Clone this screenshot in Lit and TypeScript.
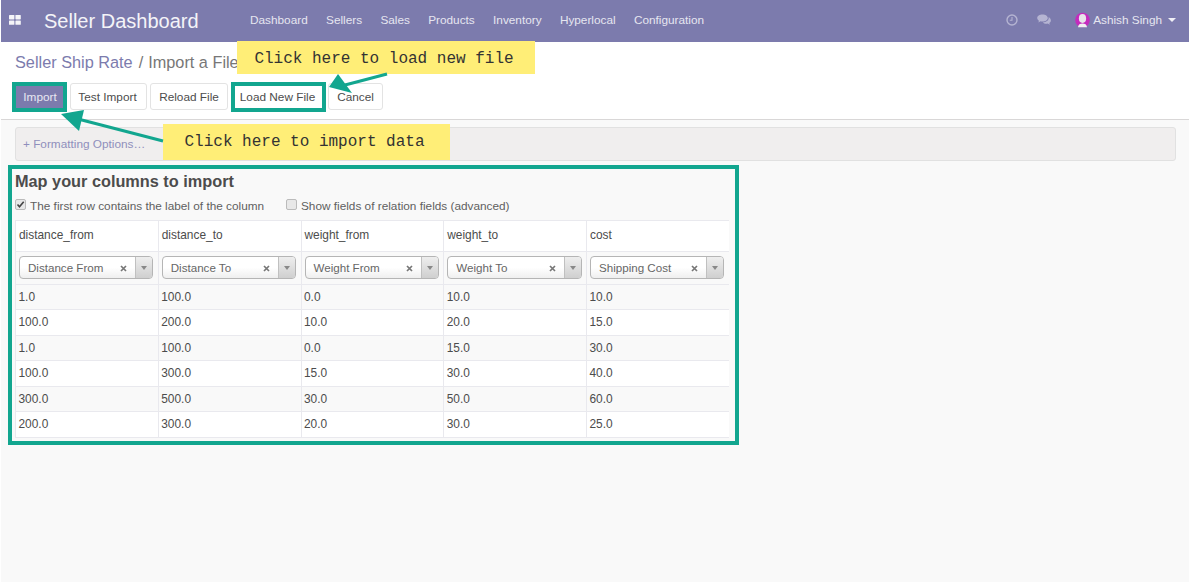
import { LitElement, html, css, svg } from "lit";
import { customElement } from "lit/decorators.js";

const HEAD = ["distance_from", "distance_to", "weight_from", "weight_to", "cost"];
const MAP = ["Distance From", "Distance To", "Weight From", "Weight To", "Shipping Cost"];
const ROWS = [
  ["1.0", "100.0", "0.0", "10.0", "10.0"],
  ["100.0", "200.0", "10.0", "20.0", "15.0"],
  ["1.0", "100.0", "0.0", "15.0", "30.0"],
  ["100.0", "300.0", "15.0", "30.0", "40.0"],
  ["300.0", "500.0", "30.0", "50.0", "60.0"],
  ["200.0", "300.0", "20.0", "30.0", "25.0"],
];
const MENU = ["Dashboard", "Sellers", "Sales", "Products", "Inventory", "Hyperlocal", "Configuration"];

@customElement("app-root")
export class AppRoot extends LitElement {
  static styles = css`
    :host { display: block; width: 1189px; height: 582px; position: relative; overflow: hidden; background: #fff;
      font-family: "Liberation Sans", Arial, sans-serif; font-size: 11.8px; color: #4c4c4c; }
    .page { display: flex; flex-direction: column; height: 582px; padding-left: 1px; box-sizing: border-box; }
    .nav { height: 42px; background: #7c7bad; display: flex; align-items: center; color: #fff; flex: none; }
    .apps { width: 12px; height: 10px; margin-left: 8px; margin-right: 23px; display: block; margin-top: -2px; }
    .brand { font-size: 20px; width: 206px; color: #f4f4f8; white-space: nowrap; }
    .menu { display: flex; gap: 18.3px; color: #e6e6f0; margin-top: -2px; }
    .right { margin-left: auto; display: flex; align-items: center; margin-right: 13px; color: #e6e6f0; margin-top: -2px; }
    .right svg { display: block; }
    .clock { margin-right: 19px; }
    .chat { margin-right: 23px; }
    .avatar { margin-right: 3px; }
    .caret { width: 0; height: 0; border-left: 4px solid transparent; border-right: 4px solid transparent; border-top: 4px solid #f0f0f6; margin-left: 6px; }
    .panel { height: 78px; flex: none; box-sizing: border-box; border-bottom: 1px solid #d9d7d7; background: #fff; padding: 10px 0 0 14px; }
    .crumb { font-size: 16.3px; line-height: 20px; color: #777; white-space: nowrap; display: flex; }
    .crumb b { font-weight: 400; color: #7c7bad; }
    .sep { margin: 0 5px 0 6px; }
    .btns { display: flex; align-items: center; margin-top: 9.5px; margin-left: -3px; }
    .btn { height: 27px; box-sizing: border-box; border: 1px solid #e3e3e3; border-radius: 3px; background: #fff; color: #4c4c4c;
      display: flex; align-items: center; justify-content: center; }
    .btn.test { padding-right: 2px; }
    .mark { border: 4px solid #12a68f; box-sizing: border-box; height: 30px; display: flex; align-items: center; justify-content: center; }
    .mark.primary { width: 55px; background: #7c7bad; color: #e8e8f2; margin-right: 3px; padding-left: 1px; }
    .mark.load { width: 95px; margin-right: 2px; margin-left: 3px; color: #4c4c4c; padding-right: 2px; }
    .test { width: 77px; margin-right: 3px; }
    .reload { width: 78px; }
    .cancel { width: 55px; }
    .main { flex: 1; background: #f9f9f9; padding: 7px 0 0 7px; }
    .fmt { margin: 0 13px 0 7px; height: 34px; box-sizing: border-box; background: #f0eeee; border: 1px solid #e1e1e1; border-radius: 3px;
      padding: 0 7px; display: flex; align-items: center; color: #8f8ebc; }
    .box { margin-top: 4px; width: 731px; height: 280px; box-sizing: border-box; border: 4px solid #12a68f; padding: 3px 6px 0 3px; }
    h2 { margin: 0; font-size: 16.3px; line-height: 18px; font-weight: 700; color: #4c4c4c; }
    .opts { display: flex; height: 24px; align-items: center; margin-top: 4px; color: #5f5f5f; }
    .cb { width: 9px; height: 9px; border: 1px solid #bbb; border-radius: 2px; background: #e8e8e8; margin-right: 4px; flex: none; display: flex; align-items: center; justify-content: center; margin-top: -3px; }
    .cb svg { display: block; }
    .o1 { width: 271px; display: flex; align-items: center; }
    .o2 { display: flex; align-items: center; }
    .grid { display: grid; grid-template-columns: repeat(5, 141.75px); column-gap: 1px; background: #e9e9ee; border: 1px solid #e9e9ee; width: 714px; box-sizing: border-box;
      grid-auto-rows: 24.5px; grid-template-rows: 30px 31.5px; row-gap: 1px; margin-top: 2px; }
    .c { padding: 0 3px 0 2.5px; display: flex; align-items: center; background: #fff; color: #4c4c4c; white-space: nowrap; min-width: 0; font-size: 11.9px; }
    .c.alt { background: #f9f9f9; }
    .c.hd { background: #fff; padding: 0 3px 2px; }
    .c.sel { background: #f9f9f9; padding: 0 4.5px 0 3px; font-size: 11.6px; }
    .select { flex: 1; height: 23px; box-sizing: border-box; border: 1px solid #b5b5b5; border-radius: 4px; display: flex; align-items: stretch;
      background: linear-gradient(#fff 50%, #efefef); color: #666; overflow: hidden; }
    .val { flex: 1; display: flex; align-items: center; padding-left: 8px; position: relative; margin-top: -1px; }
    .x { position: absolute; right: 8px; top: 9px; display: block; }
    .drop { width: 16px; flex: none; border-left: 1px solid #c0c0c0; background: linear-gradient(#eee, #cfcfcf); display: flex; align-items: center; justify-content: center; }
    .tri { width: 0; height: 0; border-left: 3px solid transparent; border-right: 3px solid transparent; border-top: 4px solid #888; }
    .note { position: absolute; background: #ffee77; color: #333; font-family: "Liberation Mono", "Courier New", monospace; font-size: 16px;
      display: flex; align-items: center; justify-content: center; white-space: nowrap; box-sizing: border-box; padding-right: 4px; }
    .n1 { left: 237px; top: 41px; width: 298px; height: 33px; padding-top: 2px; }
    .n2 { left: 163px; top: 124px; width: 287px; height: 36px; }
    .arrows { position: absolute; left: 0; top: 0; pointer-events: none; }
  `;

  render() {
    return html`
      <div class="page">
        <div class="nav">
          <svg class="apps" viewBox="0 0 12 10">
            <g fill="#f4f4f8"><rect x="0" y="0" width="5.4" height="4.4" rx=".6"/><rect x="6.4" y="0" width="5.4" height="4.4" rx=".6"/><rect x="0" y="5.4" width="5.4" height="4.4" rx=".6"/><rect x="6.4" y="5.4" width="5.4" height="4.4" rx=".6"/></g>
          </svg>
          <div class="brand">Seller Dashboard</div>
          <div class="menu">${MENU.map((m) => html`<span>${m}</span>`)}</div>
          <div class="right">
            <svg class="clock" width="12" height="12" viewBox="0 0 12 12"><circle cx="6" cy="6" r="5" fill="none" stroke="#b5b4d2" stroke-width="1.4"/><path d="M6 3v3.3H3.8" fill="none" stroke="#b5b4d2" stroke-width="1.1"/></svg>
            <svg class="chat" width="15" height="12" viewBox="0 0 15 12"><path d="M5.5 .5C2.5.5.2 2 .2 4c0 1.1.7 2 1.8 2.7L1.3 8.5 3.6 7.3c.6.1 1.2.2 1.9.2 3 0 5.3-1.600 5.300-3.500S8.500.5 5.500.5z" fill="#b5b4d2"/><path d="M11.600 3c.1.300.1.700.1 1 0 2.400-2.600 4.300-5.900 4.400.8.800 2.100 1.300 3.500 1.300.5 0 1-.1 1.400-.2l2.200 1.200-.6-1.700c1-.6 1.600-1.500 1.600-2.500 0-1.400-.9-2.500-2.300-3.500z" fill="#b5b4d2"/></svg>
            <svg class="avatar" width="15" height="16" viewBox="0 0 15 16"><circle cx="7.500" cy="8" r="7.300" fill="#c42bbd"/><ellipse cx="7.500" cy="6.500" rx="3.600" ry="4.400" fill="#e8e4ea"/><path d="M3 15.200c.3-2.700 2-3.700 4.500-3.700s4.200 1 4.500 3.700z" fill="#f2f0f2"/></svg>
            <span>Ashish Singh</span><i class="caret"></i>
          </div>
        </div>
        <div class="panel">
          <div class="crumb"><b>Seller Ship Rate</b><span class="sep">/</span><span>Import a File</span></div>
          <div class="btns">
            <div class="mark primary">Import</div>
            <div class="btn test">Test Import</div>
            <div class="btn reload">Reload File</div>
            <div class="mark load">Load New File</div>
            <div class="btn cancel">Cancel</div>
          </div>
        </div>
        <div class="main">
          <div class="fmt"><span>+ Formatting Options…</span></div>
          <div class="box">
            <h2>Map your columns to import</h2>
            <div class="opts">
              <div class="o1"><i class="cb"><svg width="9" height="9" viewBox="0 0 9 9"><path d="M1.500 4.500l2 2.200L7.700 1.800" fill="none" stroke="#444" stroke-width="1.600"/></svg></i>The first row contains the label of the column</div>
              <div class="o2"><i class="cb"></i>Show fields of relation fields (advanced)</div>
            </div>
            <div class="grid">
              ${HEAD.map((h) => html`<div class="c hd">${h}</div>`)}
              ${MAP.map((m) => html`<div class="c sel"><div class="select"><div class="val">${m}<svg class="x" width="7" height="7" viewBox="0 0 7 7"><path d="M1 1l5 5M6 1L1 6" stroke="#777" stroke-width="1.700"/></svg></div><div class="drop"><i class="tri"></i></div></div></div>`)}
              ${ROWS.map((r, i) => r.map((v) => html`<div class="c ${i % 2 === 0 ? "alt" : ""}">${v}</div>`))}
            </div>
          </div>
        </div>
      </div>
      <div class="note n1">Click here to load new file</div>
      <div class="note n2">Click here to import data</div>
      <svg class="arrows" width="1189" height="582">
        ${svg`<path d="M387 74L345 85" stroke="#12a68f" stroke-width="3" fill="none"/><path d="M329 87L338 74L352 93Z" fill="#12a68f"/>
        <path d="M163 141L78 119" stroke="#12a68f" stroke-width="3" fill="none"/><path d="M61 114L84 110L79 131Z" fill="#12a68f"/>`}
      </svg>
    `;
  }
}
